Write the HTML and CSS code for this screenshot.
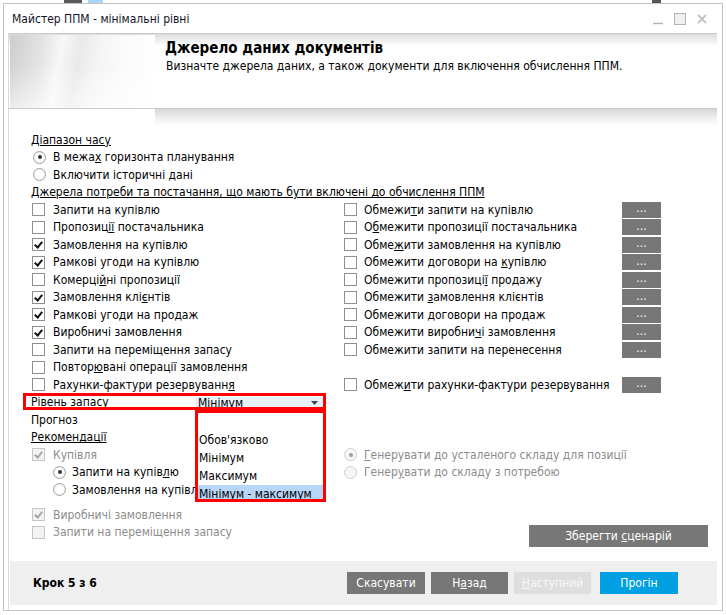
FILE: index.html
```html
<!DOCTYPE html>
<html lang="uk">
<head>
<meta charset="utf-8">
<title>Майстер ППМ - мінімальні рівні</title>
<link rel="stylesheet" href="styles.css">
</head>
<body>
<div class="desk"><span class="d1"></span><span class="d2"></span><span class="d3"></span></div>
<div class="window">
  <div class="titlebar">
    <span class="title">Майстер ППМ - мінімальні рівні</span>
    <div class="ctrls">
      <svg class="ic-min" width="12" height="12" viewBox="0 0 12 12"><path d="M1 10.5H11" stroke="#b4b4b4" stroke-width="1.4"/></svg>
      <svg class="ic-max" width="12" height="12" viewBox="0 0 12 12"><rect x="0.5" y="0.5" width="11" height="11" fill="#efefef" stroke="#b4b4b4"/></svg>
      <svg class="ic-close" width="12" height="12" viewBox="0 0 12 12"><path d="M2 2L10 10M10 2L2 10" stroke="#c4c4c4" stroke-width="2"/></svg>
    </div>
  </div>
  <div class="frame">
    <div class="header">
      <div class="banner-img"></div>
      <div class="banner-text">
        <h1>Джерело даних документів</h1>
        <p>Визначте джерела даних, а також документи для включення обчислення ППМ.</p>
      </div>
    </div>
    <div class="shadow"></div>
    <div class="content">
      <div class="row"><span class="heading">Діапазон часу</span></div>
      <div class="row"><span class="rb on"></span><span>В межа<u>х</u> горизонта планування</span></div>
      <div class="row"><span class="rb"></span><span>Включити історичні дані</span></div>
      <div class="row"><span class="heading">Джерела потреби та постачання, що мають бути включені до обчислення ППМ</span></div>

      <div class="row">
        <div class="col-l"><span class="cb"></span><span>Запити на купівлю</span></div>
        <div class="col-r"><span class="cb"></span><span>Обмежи<u>т</u>и запити на купівлю</span><span class="dots">...</span></div>
      </div>
      <div class="row">
        <div class="col-l"><span class="cb"></span><span>Пропозиц<u>ії</u> постачальника</span></div>
        <div class="col-r"><span class="cb"></span><span>О<u>б</u>межити пропозиції постачальника</span><span class="dots">...</span></div>
      </div>
      <div class="row">
        <div class="col-l"><span class="cb on"></span><span>Замовлення на купівлю</span></div>
        <div class="col-r"><span class="cb"></span><span>Обме<u>ж</u>ити замовлення на купівлю</span><span class="dots">...</span></div>
      </div>
      <div class="row">
        <div class="col-l"><span class="cb on"></span><span>Рамкові угоди на купівлю</span></div>
        <div class="col-r"><span class="cb"></span><span>Обмежити договори на <u>к</u>упівлю</span><span class="dots">...</span></div>
      </div>
      <div class="row">
        <div class="col-l"><span class="cb"></span><span>Комерці<u>й</u>ні пропозиції</span></div>
        <div class="col-r"><span class="cb"></span><span>Обмежити пропозиці<u>ї</u> продажу</span><span class="dots">...</span></div>
      </div>
      <div class="row">
        <div class="col-l"><span class="cb on"></span><span>Замовлення клі<u>є</u>нтів</span></div>
        <div class="col-r"><span class="cb"></span><span>Обмежити <u>з</u>амовлення клієнтів</span><span class="dots">...</span></div>
      </div>
      <div class="row">
        <div class="col-l"><span class="cb on"></span><span>Рамкові угоди на продаж</span></div>
        <div class="col-r"><span class="cb"></span><span>Обмежити договори на продаж</span><span class="dots">...</span></div>
      </div>
      <div class="row">
        <div class="col-l"><span class="cb on"></span><span>Виробничі замовлення</span></div>
        <div class="col-r"><span class="cb"></span><span>Обмежити виробни<u>ч</u>і замовлення</span><span class="dots">...</span></div>
      </div>
      <div class="row">
        <div class="col-l"><span class="cb"></span><span>Запити на переміщення запасу</span></div>
        <div class="col-r"><span class="cb"></span><span>Обмежити запити на перенесення</span><span class="dots">...</span></div>
      </div>
      <div class="row">
        <div class="col-l"><span class="cb"></span><span>Повтор<u>ю</u>вані операції замовлення</span></div>
      </div>
      <div class="row">
        <div class="col-l"><span class="cb"></span><span>Рахунки-фактури резервуванн<u>я</u></span></div>
        <div class="col-r"><span class="cb"></span><span>Обмеж<u>и</u>ти рахунки-фактури резервування</span><span class="dots">...</span></div>
      </div>

      <div class="row level">
        <span class="level-label">Рівень запасу</span>
        <span class="combo"><span class="combo-val">Мінімум</span><svg class="combo-arrow" width="7" height="4" viewBox="0 0 7 4"><path d="M0 0H7L3.5 4Z" fill="#444"/></svg></span>
        <span class="mark"></span>
        <div class="dropdown">
          <div class="opt"></div>
          <div class="opt">Обов'язково</div>
          <div class="opt">Мінімум</div>
          <div class="opt">Максимум</div>
          <div class="opt sel">Мінімум - максимум</div>
        </div>
      </div>
      <div class="row"><span>Прогноз</span></div>
      <div class="row"><span class="heading">Рекомендації</span></div>
      <div class="row dis">
        <div class="col-l"><span class="cb on"></span><span>Купівля</span></div>
        <div class="col-r"><span class="rb on"></span><span><u>Г</u>енерувати до усталеного складу для позиції</span></div>
      </div>
      <div class="row">
        <div class="col-l"><span class="rb sub on"></span><span>Запити на купів<u>л</u>ю</span></div>
        <div class="col-r dis"><span class="rb"></span><span>Генер<u>у</u>вати до складу з потребою</span></div>
      </div>
      <div class="row">
        <div class="col-l"><span class="rb sub"></span><span>Замовлення на купівлю</span></div>
      </div>
      <div class="bottom">
        <div class="bottom-l dis">
          <div class="row"><span class="cb on"></span><span>Виробничі замовлення</span></div>
          <div class="row"><span class="cb"></span><span>Запити на переміщення запасу</span></div>
        </div>
        <span class="btn save"><span>Зберегти <u>с</u>ценарій</span></span>
      </div>
    </div>
    <div class="footer">
      <span class="step">Крок 5 з 6</span>
      <div class="fbtns">
        <span class="btn fb">Скасувати</span>
        <span class="btn fb"><span>Н<u>а</u>зад</span></span>
        <span class="btn fb off"><span><u>Н</u>аступний</span></span>
        <span class="btn fb run">Прогін</span>
      </div>
    </div>
  </div>
</div>
</body>
</html>
```

FILE: styles.css
```css
* { box-sizing: border-box; margin: 0; padding: 0; }
body {
  width: 726px; height: 615px; overflow: hidden; background: #fff;
  font-family: Tahoma, "DejaVu Sans Condensed", "DejaVu Sans", sans-serif;
  font-size: 12px; color: #000;
}
.desk { height: 3px; display: flex; }
.desk .d1 { margin-left: 64px; width: 18px; background: #5a5a5a; }
.desk .d2 { margin-left: 6px; width: 15px; background: #a8d4f8; }
.desk .d3 { margin-left: 549px; width: 9px; background: #555; }

.window {
  margin-left: 3px; width: 720px; height: 608px;
  border: 1px solid #c3c3c3; background: #fff;
  display: flex; flex-direction: column;
}
.titlebar { height: 29px; flex: none; display: flex; align-items: center; padding-left: 8px; }
.title { color: #141428; font-size: 12px; }
.ctrls { margin-left: auto; display: flex; align-items: center; gap: 10px; padding-right: 14px; }

.frame {
  flex: 1; margin: 0 5px 0 4px;
  border-top: 1px solid #c9c9c9; border-left: 1px solid #dadada;
  display: flex; flex-direction: column;
}
.header {
  height: 75px; flex: none; display: flex; padding: 1px 0 0 1px;
  border-bottom: 1px solid #c9c9c9;
  background: linear-gradient(#dcdcdc, #fff 12px);
}
.banner-img {
  width: 145px; height: 73px;
  background:
    linear-gradient(rgba(255,255,255,0) 40%, rgba(255,255,255,0.55) 100%),
    linear-gradient(100deg, #cdcdcd 0%, #e4e4e4 22%, #f7f7f7 34%, #e9e9e9 46%, #f4f4f4 58%, #fbfbfb 75%, #fff 100%);
}
.banner-text { padding: 4px 0 0 10px; }
.banner-text h1 { font-size: 15px; font-weight: bold; line-height: 19px; }
.banner-text p { font-size: 12px; line-height: 16px; padding-left: 1px; }
.shadow { height: 16px; margin-left: 146px; flex: none; background: linear-gradient(#d8d8d8, #fff); }

.content { padding: 6px 0 0 22px; }
.row { height: 17.5px; display: flex; align-items: center; white-space: nowrap; }
.heading { text-decoration: underline; }
.col-l { width: 313px; display: flex; align-items: center; }
.col-r { width: 317px; display: flex; align-items: center; }
.col-r .cb { margin: 0 7px 0 0; }
.col-r .rb { margin: 0 7px 0 0; }

.cb {
  width: 13px; height: 13px; flex: none; margin: 0 8px 0 1px;
  border: 1px solid #8e8e8e; background: #fff; position: relative;
}
.cb.on::after {
  content: ""; position: absolute; left: 3px; top: 1px;
  width: 3px; height: 6px; border: solid #111; border-width: 0 2px 2px 0;
  transform: rotate(40deg);
}
.rb {
  width: 13px; height: 13px; flex: none; margin: 0 7px 0 2px; border-radius: 50%;
  border: 1px solid #a0a0a0; background: radial-gradient(#fff 40%, #e6e6e6 100%);
  position: relative;
}
.rb.on::after {
  content: ""; position: absolute; left: 3.5px; top: 3.5px; width: 4px; height: 4px;
  border-radius: 50%; background: #333;
}
.rb.sub { margin-left: 22px; margin-right: 6px; }

.dis { color: #8c8c8c; }
.dis .cb { border-color: #c6c6c6; background: #f3f3f3; }
.dis .cb.on::after { border-color: #a6a6a6; }
.dis .rb { border-color: #cfcfcf; background: #f6f6f6; }
.dis .rb.on::after { background: #a0a0a0; }

.dots {
  margin-left: auto; width: 39px; height: 16px; background: #777; color: #fff;
  display: flex; align-items: center; justify-content: center; font-size: 12px; line-height: 12px;
  padding-bottom: 3px;
}

.level { position: relative; z-index: 2; }
.level-label { width: 165px; }
.combo {
  width: 127px; height: 12px; background: #e6f1fb; display: flex; align-items: center;
  padding-left: 2px; position: relative; top: 0.5px;
}
.combo-val { line-height: 12px; }
.combo-arrow { margin-left: auto; margin-right: 5px; }
.mark {
  position: absolute; left: -8px; top: -1px; width: 303px; height: 17px;
  border: 3px solid #ff0000;
}
.dropdown {
  position: absolute; left: 164px; top: 16px; width: 131px; height: 92px;
  border: 3px solid #ff0000; background: #fff; overflow: hidden;
}
.opt { height: 18px; line-height: 18px; padding-left: 1px; }
.opt.sel { background: #b7d5f6; }

.bottom { display: flex; align-items: flex-start; height: 41px; margin-top: 7.5px; }
.btn {
  display: flex; align-items: center; justify-content: center;
  background: #777; color: #fff; height: 22px; font-size: 12px; white-space: nowrap;
}
.save { width: 179px; margin-left: auto; margin-right: 9px; align-self: flex-end; }

.footer {
  margin: auto 0 5px 1px; height: 44px; flex: none; background: #efefef;
  display: flex; align-items: center; padding-left: 23px;
}
.step { font-weight: bold; }
.fbtns { margin-left: auto; display: flex; padding-right: 39px; }
.fb { width: 78px; margin-left: 6px; }
.fb:nth-child(2), .fb:nth-child(3) { width: 77px; }
.fb.off { background: #dedede; color: #f7f7f7; }
.fb.run { background: #00a0e3; margin-left: 9px; }
```
